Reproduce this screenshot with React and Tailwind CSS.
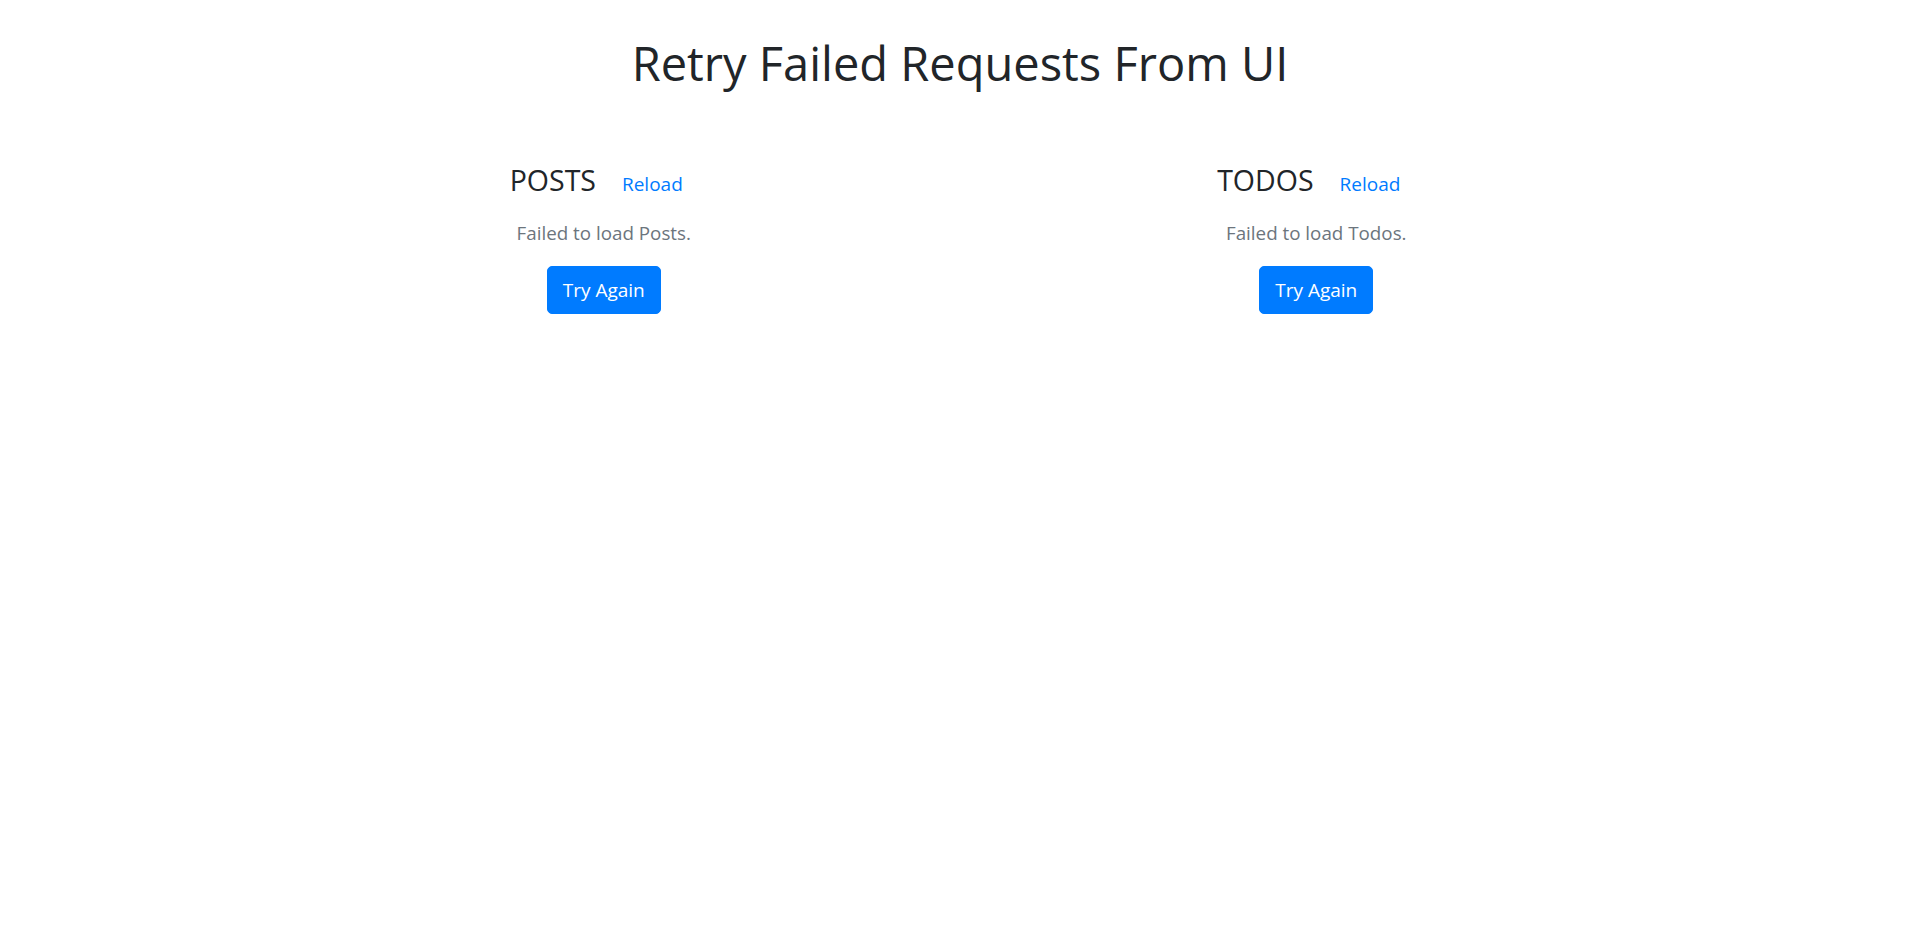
import React from 'react';

const font = { fontFamily: '"Segoe UI", "Open Sans", "Noto Sans", Arial, sans-serif' };

const panels = [
  { id: 'posts', title: 'POSTS', message: 'Failed to load Posts.' },
  { id: 'todos', title: 'TODOS', message: 'Failed to load Todos.' },
];

function Panel({ title, message }) {
  return (
    <div className="px-[18.75px] flex flex-col items-center text-center">
      <div className="flex items-baseline justify-center">
        <h4 className="text-[28.5px] leading-[36px] font-normal text-[#212529] mr-[11px]">{title}</h4>
        <button className="px-[15px] py-[7.5px] text-[19px] leading-[30px] text-[#007bff] hover:underline">Reload</button>
      </div>
      <p className="mt-[12px] text-[18.8px] leading-[30px] text-[#6c757d]">{message}</p>
      <button className="mt-[18px] h-[47.5px] px-[15px] rounded-[5px] bg-[#007bff] hover:bg-[#0069d9] text-white text-[19px] leading-[30px] border border-[#007bff]">
        Try Again
      </button>
    </div>
  );
}

export default function App() {
  return (
    <div className="min-h-screen bg-white" style={font}>
      <h1 className="pt-[33px] text-center text-[47px] leading-[60px] font-normal text-[#212529]">
        Retry Failed Requests From UI
      </h1>
      <div className="mx-auto w-[1425px] mt-[68px] grid grid-cols-2">
        {panels.map(p => (
          <Panel key={p.id} title={p.title} message={p.message} />
        ))}
      </div>
    </div>
  );
}
